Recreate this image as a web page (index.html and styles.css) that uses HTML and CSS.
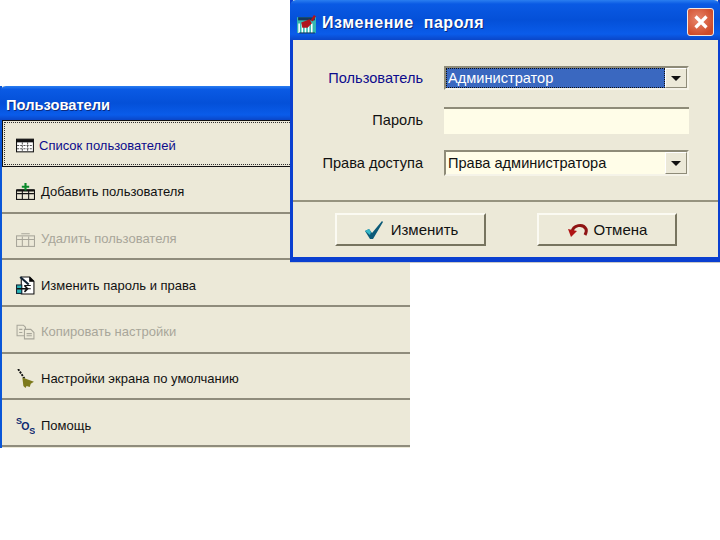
FILE: index.html
```html
<!DOCTYPE html>
<html lang="ru">
<head>
<meta charset="utf-8">
<title>Пользователи</title>
<link rel="stylesheet" href="styles.css">
</head>
<body>
<section class="window users">
  <header class="titlebar users-title"><span class="title-text">Пользователи</span></header>
  <nav class="menu">
    <div class="menu-row active">
      <div class="focus">
        <svg class="icon" viewBox="0 0 18 18"><rect x="0.5" y="3" width="16" height="12" fill="#fff" stroke="#111"/><rect x="0.5" y="3" width="16" height="3" fill="#111"/><path d="M6 6v9M11 6v9M1 9h15M1 12h15" stroke="#555" stroke-dasharray="2 1"/></svg>
        <span class="menu-label link">Список пользователей</span>
      </div>
    </div>
    <div class="menu-row">
      <svg class="icon" viewBox="0 0 18 18"><rect x="0.5" y="7.5" width="17" height="9" fill="#ece9d8" stroke="#111"/><path d="M1 11h16M6 8v8M12 8v8" stroke="#111"/><rect x="1" y="7" width="16" height="2" fill="#111"/><path d="M9 1v7M5.5 4.5h7" stroke="#0a8a2a" stroke-width="2"/></svg>
      <span class="menu-label">Добавить пользователя</span>
    </div>
    <div class="menu-row disabled">
      <svg class="icon" viewBox="0 0 18 18"><rect x="0.5" y="6.5" width="17" height="10" fill="none" stroke="#a8a69a"/><path d="M1 10h16M6 7v9M12 7v9M5 4.500h8" stroke="#a8a69a"/></svg>
      <span class="menu-label">Удалить пользователя</span>
    </div>
    <div class="menu-row">
      <svg class="icon" viewBox="0 0 18 18"><path d="M5 1h8l4 4v12H5z" fill="#fff" stroke="#111"/><path d="M13 1v4h4M8 9h6M8 12h6" stroke="#111"/><path d="M4 1l8 7" stroke="#123" stroke-width="2"/><rect x="0.500" y="8.500" width="5" height="8" fill="#28b4b8" stroke="#123"/><path d="M1 12h10M8 9l3 3-3 3" stroke="#111" stroke-width="1.500" fill="none"/></svg>
      <span class="menu-label">Изменить пароль и права</span>
    </div>
    <div class="menu-row disabled">
      <svg class="icon" viewBox="0 0 18 18"><path d="M1 3h6l2 2v8H1z" fill="#ece9d8" stroke="#a8a69a"/><path d="M8 7h6l3 3v6H8z" fill="#ece9d8" stroke="#a8a69a"/><path d="M3 7h3M3 10h3M10 11h5M10 13h5" stroke="#a8a69a"/></svg>
      <span class="menu-label">Копировать настройки</span>
    </div>
    <div class="menu-row">
      <svg class="icon" viewBox="0 0 18 18"><path d="M2 0l6 9" stroke="#111" stroke-width="1.800" stroke-dasharray="2 1"/><path d="M6 8l11 4-3 2-1 3-3-1-1 2-2-2z" fill="#7d7a1c"/></svg>
      <span class="menu-label">Настройки экрана по умолчанию</span>
    </div>
    <div class="menu-row">
      <svg class="icon" viewBox="0 0 18 18"><text class="sos" x="0" y="7.500">S</text><text class="sos big" x="5" y="13">O</text><text class="sos" x="12.500" y="17.500">S</text></svg>
      <span class="menu-label">Помощь</span>
    </div>
  </nav>
</section>

<section class="window dialog">
  <header class="titlebar dialog-title">
    <svg class="app-icon" viewBox="0 0 20 20"><rect x="1" y="4" width="18" height="15" fill="#35b8b0"/><path d="M3 10v9M6 10v9M9 10v9M12 10v9M15 10v9" stroke="#fff" stroke-width="1.500"/><path d="M2 4h16v3H2z" fill="#15385c"/><path d="M5 9l8-3 2 4-4 4H6z" fill="#b0141c"/><path d="M14 7l3-5 2 1-3 5z" fill="#b0141c"/><path d="M3 19h15" stroke="#15385c"/></svg>
    <span class="title-text wide">Изменение  пароля</span>
    <span class="close">
      <svg viewBox="0 0 24 24"><path d="M6 6l12 12M18 6L6 18" stroke="#fff" stroke-width="3.500"/></svg>
    </span>
  </header>
  <div class="dialog-body">
    <div class="form">
      <label class="form-label link">Пользователь</label>
      <div class="combo">
        <span class="combo-value selected">Администратор</span>
        <span class="combo-btn"><i class="arrow"></i></span>
      </div>
      <label class="form-label">Пароль</label>
      <div class="input"></div>
      <label class="form-label">Права доступа</label>
      <div class="combo">
        <span class="combo-value">Права администратора</span>
        <span class="combo-btn"><i class="arrow"></i></span>
      </div>
    </div>
    <div class="actions">
      <button class="btn ok" type="button">
        <svg class="btn-icon" viewBox="0 0 22 20"><path d="M2 11l4-2 3 4L19 1l1 1L10 19H7z" fill="#0c5a78"/><path d="M2 11l4-2 2 3-1 3z" fill="#35b8c8"/></svg>
        <span>Изменить</span>
      </button>
      <button class="btn cancel" type="button">
        <svg class="btn-icon" viewBox="0 0 22 20"><path d="M5 12c1-7 11-9 14-3 1 2 0 4-1 6" fill="none" stroke="#8f1414" stroke-width="3"/><path d="M1 9l9 2-6 6z" fill="#b01414"/></svg>
        <span>Отмена</span>
      </button>
    </div>
  </div>
</section>
</body>
</html>
```

FILE: styles.css
```css
* { box-sizing: border-box; }
html, body { margin: 0; padding: 0; }
body {
  position: relative;
  width: 720px;
  height: 540px;
  overflow: hidden;
  background: #fff;
  font-family: "Liberation Sans", Arial, sans-serif;
  font-size: 13px;
  color: #111;
}
.window { position: absolute; background: #ece9d8; }
.users { left: 0; top: 86px; width: 410px; height: 362px; border-left: 2px solid #0a56d8; }
.dialog {
  left: 290px; top: 0; width: 430px; height: 262px;
  display: flex; flex-direction: column;
  border: solid #0a3fd0; border-width: 0 2px 5px 3px;
  box-shadow: 0 1px 0 #c9c9c9;
}
.titlebar {
  display: flex; align-items: center;
  background: linear-gradient(#2a7ef0 0, #0a5ae4 10%, #0450d8 50%, #0a5cea 85%, #0a46c8 100%);
  color: #fff; font-weight: 700;
}
.users-title { height: 34px; padding: 4px 0 0 6px; margin-left: -2px; border-radius: 6px 0 0 0; font-size: 14.700px; }
.title-text { text-shadow: 1px 1px 0 #0a2a80; }
.dialog-title { flex: none; height: 40px; padding: 6px 2px 0 6px; margin: 0 -2px 0 -3px; font-size: 16px; border-radius: 6px 6px 0 0; }
.wide { white-space: pre; letter-spacing: .55px; margin-left: 4px; }
.app-icon { width: 21px; height: 21px; margin-right: 1px; }
.close {
  margin: -2px 4px 0 auto; width: 27px; height: 28px;
  display: flex; align-items: center; justify-content: center;
  background: radial-gradient(circle at 40% 40%, #e8866c, #cf4b2a 75%);
  border: 1px solid #f4e8e0; border-radius: 3px;
}
.close svg { width: 22px; height: 22px; }
.menu { display: flex; flex-direction: column; }
.menu-row {
  display: flex; align-items: center; gap: 6px;
  height: 46.700px; padding: 5px 0 0 14px;
  border-bottom: 2px solid #8f8c7c;
  font-size: 13px;
}
.menu-row.active { padding: 0; height: 47px; border-bottom: 0; }
.focus {
  flex: 1; height: 100%;
  display: flex; align-items: center; gap: 4px;
  padding: 3px 0 0 13px;
  border: 1px solid #111;
  border-right-color: #ece9d8;
  outline: 1px dotted #333; outline-offset: -3px;
}
.icon { width: 19px; height: 19px; flex: none; }
.link { color: #0c0c8c; }
.disabled { color: #a8a69a; }
.sos { font: 700 8.500px "Liberation Sans", sans-serif; fill: #0c2a70; }
.big { font-size: 10px; }
.form {
  display: grid;
  grid-template-columns: 130px 245px;
  column-gap: 21px;
  grid-template-rows: 24px 27px 26px;
  row-gap: 16.500px;
  align-items: center;
  padding-top: 26px;
  padding-bottom: 24px;
  border-bottom: 2px solid #96937f;
  font-size: 14.600px;
}
.form-label { text-align: right; }
.combo { display: flex; height: 100%; border: 2px solid; border-color: #8e8b78 #f5f3e8 #f5f3e8 #8e8b78; background: #fffde8; }
.combo-value { flex: 1; display: flex; align-items: center; padding-left: 2px; }
.combo-value.selected { background: #3a68c0; color: #fff; outline: 1px dotted #111; outline-offset: -1px; }
.combo-btn {
  flex: none; width: 22px; display: flex; align-items: center; justify-content: center;
  background: #ece9d8; border: 1px solid; border-color: #fff #8e8b78 #8e8b78 #fff;
}
.arrow { width: 0; height: 0; border: 5px solid transparent; border-top: 5px solid #111; border-bottom: 0; }
.input { height: 100%; background: #fffde8; border-top: 2px solid #8e8b78; }
.actions { display: flex; gap: 51px; padding: 11px 0 0 42px; }
.btn {
  display: flex; align-items: center; justify-content: center; gap: 6px;
  height: 33px;
  background: #ece9d8;
  border: 2px solid; border-color: #fbfaf2 #77745f #77745f #fbfaf2;
  font: 15px "Liberation Sans", Arial, sans-serif;
  color: #111;
}
.ok { width: 151px; }
.cancel { width: 140px; gap: 5px; }
.btn-icon { width: 22px; height: 20px; }
```
